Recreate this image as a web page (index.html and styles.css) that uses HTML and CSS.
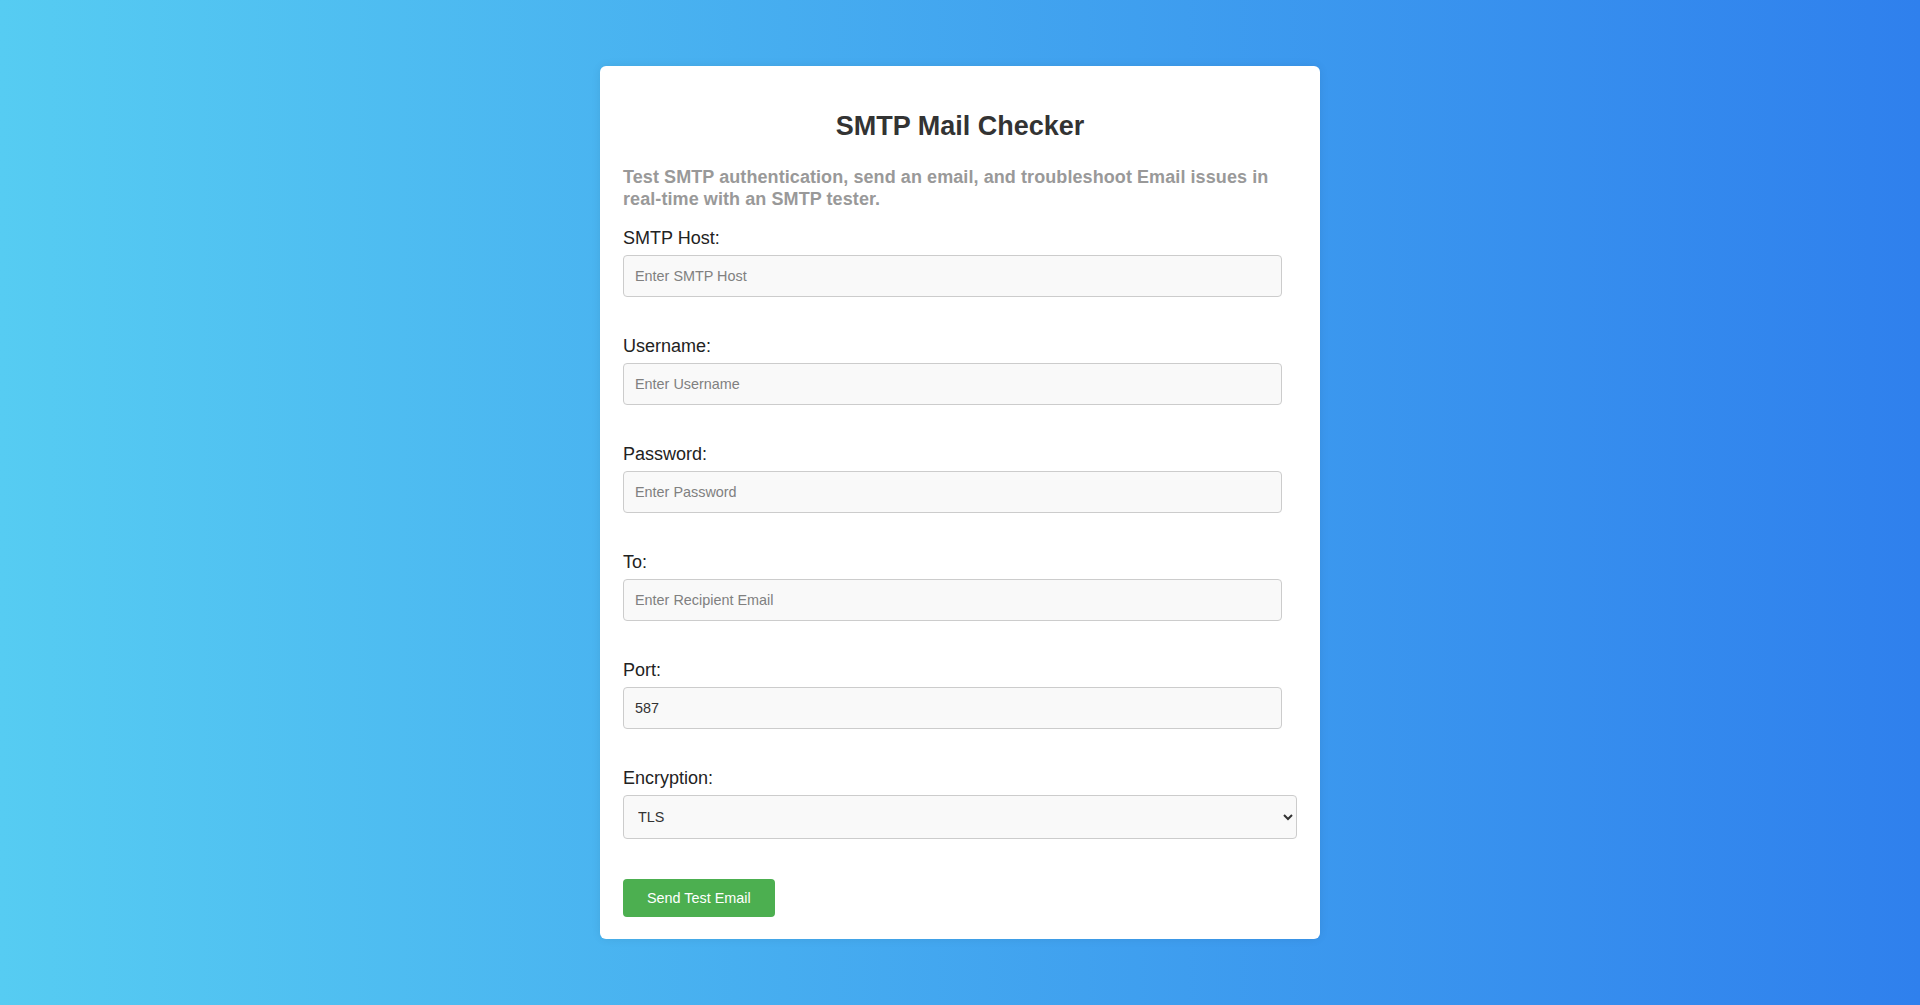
FILE: index.html
```html
<!DOCTYPE html>
<html lang="en">
<head>
<meta charset="utf-8">
<title>SMTP Mail Checker</title>
<link rel="stylesheet" href="styles.css">
</head>
<body>
  <main class="card">
    <h2 class="title">SMTP Mail Checker</h2>
    <p class="subtitle">Test SMTP authentication, send an email, and troubleshoot Email issues in real-time with an SMTP tester.</p>
    <form class="form">
      <label class="label" for="host">SMTP Host:</label>
      <input class="field" id="host" type="text" placeholder="Enter SMTP Host">

      <label class="label" for="user">Username:</label>
      <input class="field" id="user" type="text" placeholder="Enter Username">

      <label class="label" for="pass">Password:</label>
      <input class="field" id="pass" type="password" placeholder="Enter Password">

      <label class="label" for="to">To:</label>
      <input class="field" id="to" type="email" placeholder="Enter Recipient Email">

      <label class="label" for="port">Port:</label>
      <input class="field" id="port" type="text" value="587">

      <label class="label" for="enc">Encryption:</label>
      <select class="select" id="enc">
        <option>TLS</option>
        <option>SSL</option>
        <option>None</option>
      </select>

      <button class="btn" type="button">Send Test Email</button>
    </form>
  </main>
</body>
</html>
```
FILE: styles.css
```css
html, body {
  margin: 0;
  padding: 0;
}

body {
  font-family: "Liberation Sans", Arial, sans-serif;
  font-size: 18px;
  background: linear-gradient(to right, #56ccf2, #2f80ed);
  min-height: 100vh;
  display: flex;
  align-items: center;
  justify-content: center;
}

.card {
  width: 720px;
  box-sizing: border-box;
  background: #ffffff;
  border-radius: 6px;
  padding: 23px 23px 22px;
  box-shadow: 0 0 10px rgba(0, 0, 0, 0.08);
}

.title {
  font-size: 27px;
  font-weight: bold;
  color: #333333;
  text-align: center;
  margin: 21.6px 0 24.4px;
}

.subtitle {
  font-weight: bold;
  color: #999999;
  line-height: 22px;
  letter-spacing: 0.08px;
  margin: 0 0 17.6px;
}

.form {
  display: flex;
  flex-direction: column;
  align-items: flex-start;
}

.label {
  display: block;
  color: #222222;
  line-height: 21px;
  margin-bottom: 6px;
}

.field {
  display: block;
  box-sizing: border-box;
  width: calc(100% - 15px);
  height: 42px;
  padding: 0 11px;
  margin: 0 0 39px;
  border: 1px solid #cccccc;
  border-radius: 4px;
  background: #f9f9f9;
  font-family: "Liberation Sans", Arial, sans-serif;
  font-size: 14.4px;
  color: #333333;
}

.field::placeholder {
  color: #808080;
}

.select {
  display: block;
  box-sizing: border-box;
  width: 100%;
  height: 44px;
  padding: 0 10px;
  margin: 0 0 39.5px;
  border: 1px solid #cccccc;
  border-radius: 4px;
  background-color: #f9f9f9;
  font-family: "Liberation Sans", Arial, sans-serif;
  font-size: 14.4px;
  color: #333333;
}

.btn {
  box-sizing: border-box;
  height: 38px;
  padding: 0 24px;
  border: none;
  border-radius: 4px;
  background: #4caf50;
  color: #ffffff;
  font-family: "Liberation Sans", Arial, sans-serif;
  font-size: 14.4px;
  cursor: pointer;
}
```
